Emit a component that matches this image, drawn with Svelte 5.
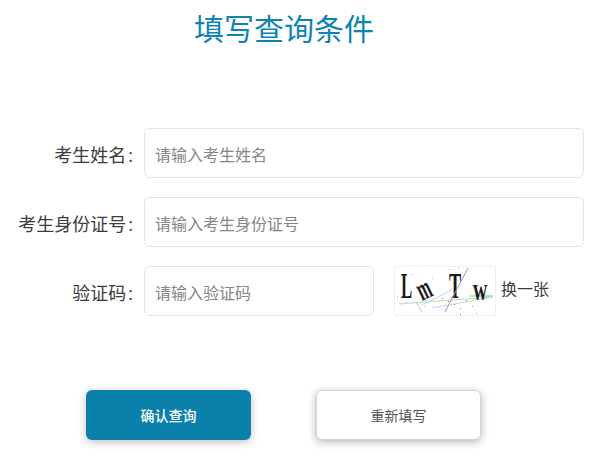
<script>
	let name = $state('');
	let idCard = $state('');
	let code = $state('');

	const dots = [
		[3,30,'#c9c96a'],[18,8,'#a8b8c8'],[22,20,'#c8a8c8'],[31,34,'#a0a060'],[38,12,'#b8c8a0'],
		[55,3,'#c0b080'],[60,38,'#8888aa'],[64,2,'#b0c8b0'],[72,34,'#668866'],[78,40,'#88aa88'],
		[66,48,'#506050'],[66,42,'#7080b0'],[54,35,'#a06060'],[48,32,'#907090'],[78,19,'#d0d080'],
		[82,47,'#90a060'],[92,30,'#b0c0d0'],[12,36,'#c0d0a0'],[30,40,'#a8c0a0'],[44,44,'#c0b0d0']
	];
</script>

<div class="page">
	<h1>填写查询条件</h1>

	<form class="query" onsubmit={(e) => e.preventDefault()}>
		<div class="row">
			<label for="name">考生姓名<span class="colon">:</span></label>
			<input id="name" type="text" placeholder="请输入考生姓名" bind:value={name} />
		</div>
		<div class="row">
			<label for="idcard">考生身份证号<span class="colon">:</span></label>
			<input id="idcard" type="text" placeholder="请输入考生身份证号" bind:value={idCard} />
		</div>
		<div class="row">
			<label for="code">验证码<span class="colon">:</span></label>
			<div class="code-wrap">
				<input id="code" class="short" type="text" placeholder="请输入验证码" bind:value={code} />
				<svg class="captcha" width="102" height="50" viewBox="0 0 102 50">
					<rect x="0.5" y="0.5" width="101" height="49" fill="#fff" stroke="#f1f1f1" />
					<path d="M5 38 L99 31" stroke="#b9dcb0" stroke-width="1.2" fill="none" />
					<path d="M76 30 L99 30" stroke="#86d29a" stroke-width="1.2" fill="none" />
					<path d="M22 36 L28 46" stroke="#b5d5dc" stroke-width="1.2" fill="none" />
					<path d="M28 39 L58 24" stroke="#c0dcea" stroke-width="1" fill="none" />
					<path d="M38 42 L99 31" stroke="#c4d4e8" stroke-width="1" fill="none" />
					{#each dots as [x, y, c]}
						<rect {x} {y} width="1" height="1" fill={c} />
					{/each}
					<text class="cap" font-size="35" transform="translate(7 32) scale(.48 1)">L</text>
					<text class="cap" font-size="32" transform="translate(28 35) rotate(-25) scale(.5 1)">m</text>
					<text class="cap" font-size="35" transform="translate(55 32) scale(.52 1)">T</text>
					<text class="cap" font-size="32" transform="translate(79 34) scale(.62 1)">w</text>
					<path d="M51 46 L74 2" stroke="#a58cc0" stroke-width="1" fill="none" />
				</svg>
				<span class="swap">换一张</span>
			</div>
		</div>

		<div class="actions">
			<button type="submit" class="primary">确认查询</button>
			<button type="reset" class="plain">重新填写</button>
		</div>
	</form>
</div>

<style>
	:global(body) {
		background: #fff;
		font-family: "Open Sans", "Noto Sans CJK SC", sans-serif;
	}

	.page {
		width: 599px;
		height: 457px;
		overflow: hidden;
	}

	h1 {
		margin: 0;
		padding: 9px 31px 0 0;
		font-size: 30px;
		line-height: 40px;
		font-weight: 400;
		text-align: center;
		color: #0d84b2;
	}

	.query {
		margin-top: 79px;
	}

	.row {
		display: grid;
		grid-template-columns: 134px 1fr;
		column-gap: 10px;
		width: 584px;
		margin-bottom: 19px;
		align-items: center;
	}

	label {
		box-sizing: border-box;
		height: 50px;
		padding: 2px 1px 0 0;
		font-size: 18px;
		color: #3c3c3c;
		white-space: nowrap;
		text-align: right;
		line-height: 50px;
	}

	.colon {
		margin-left: 2px;
	}

	input {
		box-sizing: border-box;
		width: 440px;
		height: 50px;
		padding: 3px 10px 0;
		border: 1px solid #e3e3e3;
		border-radius: 6px;
		outline: none;
		font-family: inherit;
		font-size: 16px;
		color: #333;
	}

	input::placeholder {
		color: #858585;
		opacity: 1;
	}

	input.short {
		width: 230px;
	}

	.code-wrap {
		display: flex;
		align-items: center;
	}

	.captcha {
		margin-left: 20px;
		flex: none;
	}

	.cap {
		font-family: "Liberation Serif", serif;
		font-weight: 700;
		fill: #1a1a1a;
	}

	.swap {
		margin-left: 5px;
		margin-top: -7px;
		font-size: 16px;
		color: #3c3c3c;
	}

	.actions {
		display: flex;
		gap: 65px;
		margin-top: 74px;
		padding-left: 86px;
	}

	button {
		box-sizing: border-box;
		width: 165px;
		height: 50px;
		border-radius: 6px;
		font-family: inherit;
		font-size: 14px;
		cursor: pointer;
	}

	.primary {
		border: none;
		background: #0a80ab;
		color: #fff;
		font-weight: 500;
		box-shadow: 0 2px 8px rgba(0, 0, 0, 0.25);
	}

	.plain {
		border: 1px solid #d4d4d4;
		background: #fff;
		color: #555;
		box-shadow: 0 2px 8px rgba(0, 0, 0, 0.3);
	}
</style>
